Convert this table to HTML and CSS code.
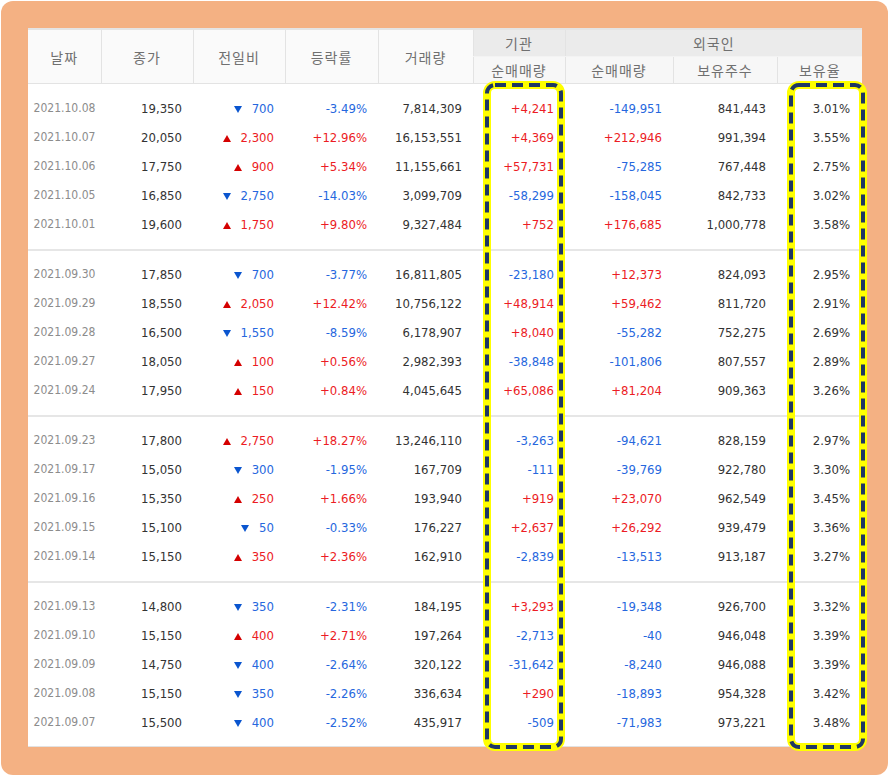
FILE: index.html
```html
<!DOCTYPE html>
<html lang="ko">
<head>
<meta charset="utf-8">
<title>투자자별 매매동향</title>
<link rel="stylesheet" href="styles.css">
</head>
<body>
<div class="frame">
  <div class="panel">
    <table class="grid">
      <colgroup>
        <col class="c-date"><col class="c-close"><col class="c-diff"><col class="c-rate"><col class="c-vol">
        <col class="c-inst"><col class="c-fnet"><col class="c-fhold"><col class="c-fratio">
      </colgroup>
      <thead>
        <tr>
          <th rowspan="2" class="top">날짜</th>
          <th rowspan="2" class="top">종가</th>
          <th rowspan="2" class="top">전일비</th>
          <th rowspan="2" class="top">등락률</th>
          <th rowspan="2" class="top">거래량</th>
          <th class="grp">기관</th>
          <th colspan="3" class="grp">외국인</th>
        </tr>
        <tr>
          <th class="sub">순매매량</th>
          <th class="sub">순매매량</th>
          <th class="sub">보유주수</th>
          <th class="sub">보유율</th>
        </tr>
      </thead>
      <tbody id="body1"></tbody>
    </table>
  </div>
  <svg class="marks" viewBox="0 0 890 776" width="890" height="776">
    <rect x="487" y="85" width="74" height="662" rx="8" class="hl-y"/>
    <rect x="487" y="85" width="74" height="662" rx="8" class="hl-d"/>
    <rect x="791" y="85" width="72" height="662" rx="8" class="hl-y"/>
    <rect x="791" y="85" width="72" height="662" rx="8" class="hl-d"/>
  </svg>
</div>
<script src="app.js"></script>
</body>
</html>
```
FILE: app.js
```js
const groups = [
  [
    ["2021.10.08","19,350","d","700","-3.49%","7,814,309","+4,241","-149,951","841,443","3.01%"],
    ["2021.10.07","20,050","u","2,300","+12.96%","16,153,551","+4,369","+212,946","991,394","3.55%"],
    ["2021.10.06","17,750","u","900","+5.34%","11,155,661","+57,731","-75,285","767,448","2.75%"],
    ["2021.10.05","16,850","d","2,750","-14.03%","3,099,709","-58,299","-158,045","842,733","3.02%"],
    ["2021.10.01","19,600","u","1,750","+9.80%","9,327,484","+752","+176,685","1,000,778","3.58%"]
  ],
  [
    ["2021.09.30","17,850","d","700","-3.77%","16,811,805","-23,180","+12,373","824,093","2.95%"],
    ["2021.09.29","18,550","u","2,050","+12.42%","10,756,122","+48,914","+59,462","811,720","2.91%"],
    ["2021.09.28","16,500","d","1,550","-8.59%","6,178,907","+8,040","-55,282","752,275","2.69%"],
    ["2021.09.27","18,050","u","100","+0.56%","2,982,393","-38,848","-101,806","807,557","2.89%"],
    ["2021.09.24","17,950","u","150","+0.84%","4,045,645","+65,086","+81,204","909,363","3.26%"]
  ],
  [
    ["2021.09.23","17,800","u","2,750","+18.27%","13,246,110","-3,263","-94,621","828,159","2.97%"],
    ["2021.09.17","15,050","d","300","-1.95%","167,709","-111","-39,769","922,780","3.30%"],
    ["2021.09.16","15,350","u","250","+1.66%","193,940","+919","+23,070","962,549","3.45%"],
    ["2021.09.15","15,100","d","50","-0.33%","176,227","+2,637","+26,292","939,479","3.36%"],
    ["2021.09.14","15,150","u","350","+2.36%","162,910","-2,839","-13,513","913,187","3.27%"]
  ],
  [
    ["2021.09.13","14,800","d","350","-2.31%","184,195","+3,293","-19,348","926,700","3.32%"],
    ["2021.09.10","15,150","u","400","+2.71%","197,264","-2,713","-40","946,048","3.39%"],
    ["2021.09.09","14,750","d","400","-2.64%","320,122","-31,642","-8,240","946,088","3.39%"],
    ["2021.09.08","15,150","d","350","-2.26%","336,634","+290","-18,893","954,328","3.42%"],
    ["2021.09.07","15,500","d","400","-2.52%","435,917","-509","-71,983","973,221","3.48%"]
  ]
];

const up = '<svg class="tri" width="8" height="7" viewBox="0 0 8 7"><polygon points="0,7 4,0 8,7" fill="#d40000"/></svg>';
const down = '<svg class="tri" width="8" height="7" viewBox="0 0 8 7"><polygon points="0,0 8,0 4,7" fill="#0a55cf"/></svg>';

function sign(v) {
  if (v.startsWith("+")) return "up";
  if (v.startsWith("-")) return "down";
  return "";
}

const table = document.querySelector(".grid");
const first = document.getElementById("body1");
groups.forEach((g, gi) => {
  const tb = gi === 0 ? first : document.createElement("tbody");
  tb.className = gi === 0 ? "group first-group" : "group";
  g.forEach((r) => {
    const tr = document.createElement("tr");
    const dirCls = r[2] === "u" ? "up" : "down";
    tr.innerHTML =
      `<td class="date">${r[0]}</td>` +
      `<td class="num">${r[1]}</td>` +
      `<td class="num ${dirCls}">${r[2] === "u" ? up : down}${r[3]}</td>` +
      `<td class="num ${sign(r[4])}">${r[4]}</td>` +
      `<td class="num">${r[5]}</td>` +
      `<td class="num ${sign(r[6])}">${r[6]}</td>` +
      `<td class="num ${sign(r[7])}">${r[7]}</td>` +
      `<td class="num">${r[8]}</td>` +
      `<td class="num pct">${r[9]}</td>`;
    tb.appendChild(tr);
  });
  if (gi > 0) table.appendChild(tb);
});
```
FILE: styles.css
```css
html, body {
  margin: 0;
  padding: 0;
  background: #ffffff;
}

.frame {
  position: relative;
  margin: 1px;
  width: 887px;
  height: 774px;
  box-sizing: border-box;
  padding: 27px 26px 28px 27px;
  background: #f4b183;
  border-radius: 12px;
}

.panel {
  background: #ffffff;
  width: 834px;
  height: 719px;
  box-sizing: border-box;
  border-top: 2px solid #e4e4e4;
  border-bottom: 1px solid #e2e2e2;
}

.grid {
  width: 834px;
  table-layout: fixed;
  border-collapse: collapse;
  border-spacing: 0;
  font-family: "DejaVu Sans Condensed", "Liberation Sans", sans-serif;
}

.c-date { width: 73px; }
.c-close { width: 92px; }
.c-diff { width: 92px; }
.c-rate { width: 93px; }
.c-vol { width: 95px; }
.c-inst { width: 92px; }
.c-fnet { width: 108px; }
.c-fhold { width: 104px; }
.c-fratio { width: 85px; }

th {
  font-family: "Noto Sans CJK KR", "Noto Sans", sans-serif;
  font-weight: 400;
  font-size: 14px;
  letter-spacing: 1px;
  color: #707070;
  height: 26px;
  padding: 0;
  line-height: 26px;
  text-align: center;
  border-left: 1px solid #e3e3e3;
}

th:first-child { border-left: none; }

th.top {
  background: #fafafa;
  border-bottom: 1px solid #e3e3e3;
}

th.grp {
  background: #ebebeb;
  border-bottom: 1px solid #f3f3f3;
}

th.sub {
  background: #f7f7f7;
  border-bottom: 1px solid #e3e3e3;
}

tr:nth-child(2) th.sub:first-child { border-left: 1px solid #e3e3e3; }

tbody.group { border-top: 2px solid #e6e6e6; }
tbody.first-group { border-top: none; }

td {
  padding: 0 11px 0 0;
  line-height: 29px;
  height: 29px;
  font-size: 13px;
  color: #333333;
  text-align: right;
  white-space: nowrap;
}

tbody tr:first-child td { padding-top: 9px; }
tbody.first-group tr:first-child td { padding-top: 10px; }
tbody tr:last-child td { padding-bottom: 10px; }

td.date {
  text-align: center;
  padding-right: 0;
  font-size: 12px;
  color: #8c8c8c;
}

td.pct { padding-right: 12px; }

td.up { color: #ec1c24; }
td.down { color: #2667de; }

.tri {
  display: inline-block;
  vertical-align: 0px;
  margin-right: 10px;
}

.marks {
  position: absolute;
  left: -1px;
  top: -1px;
  pointer-events: none;
}

.hl-y {
  fill: none;
  stroke: #ffff00;
  stroke-width: 8;
}

.hl-d {
  fill: none;
  stroke: #1f3864;
  stroke-width: 4;
  stroke-dasharray: 11 6;
}
```
